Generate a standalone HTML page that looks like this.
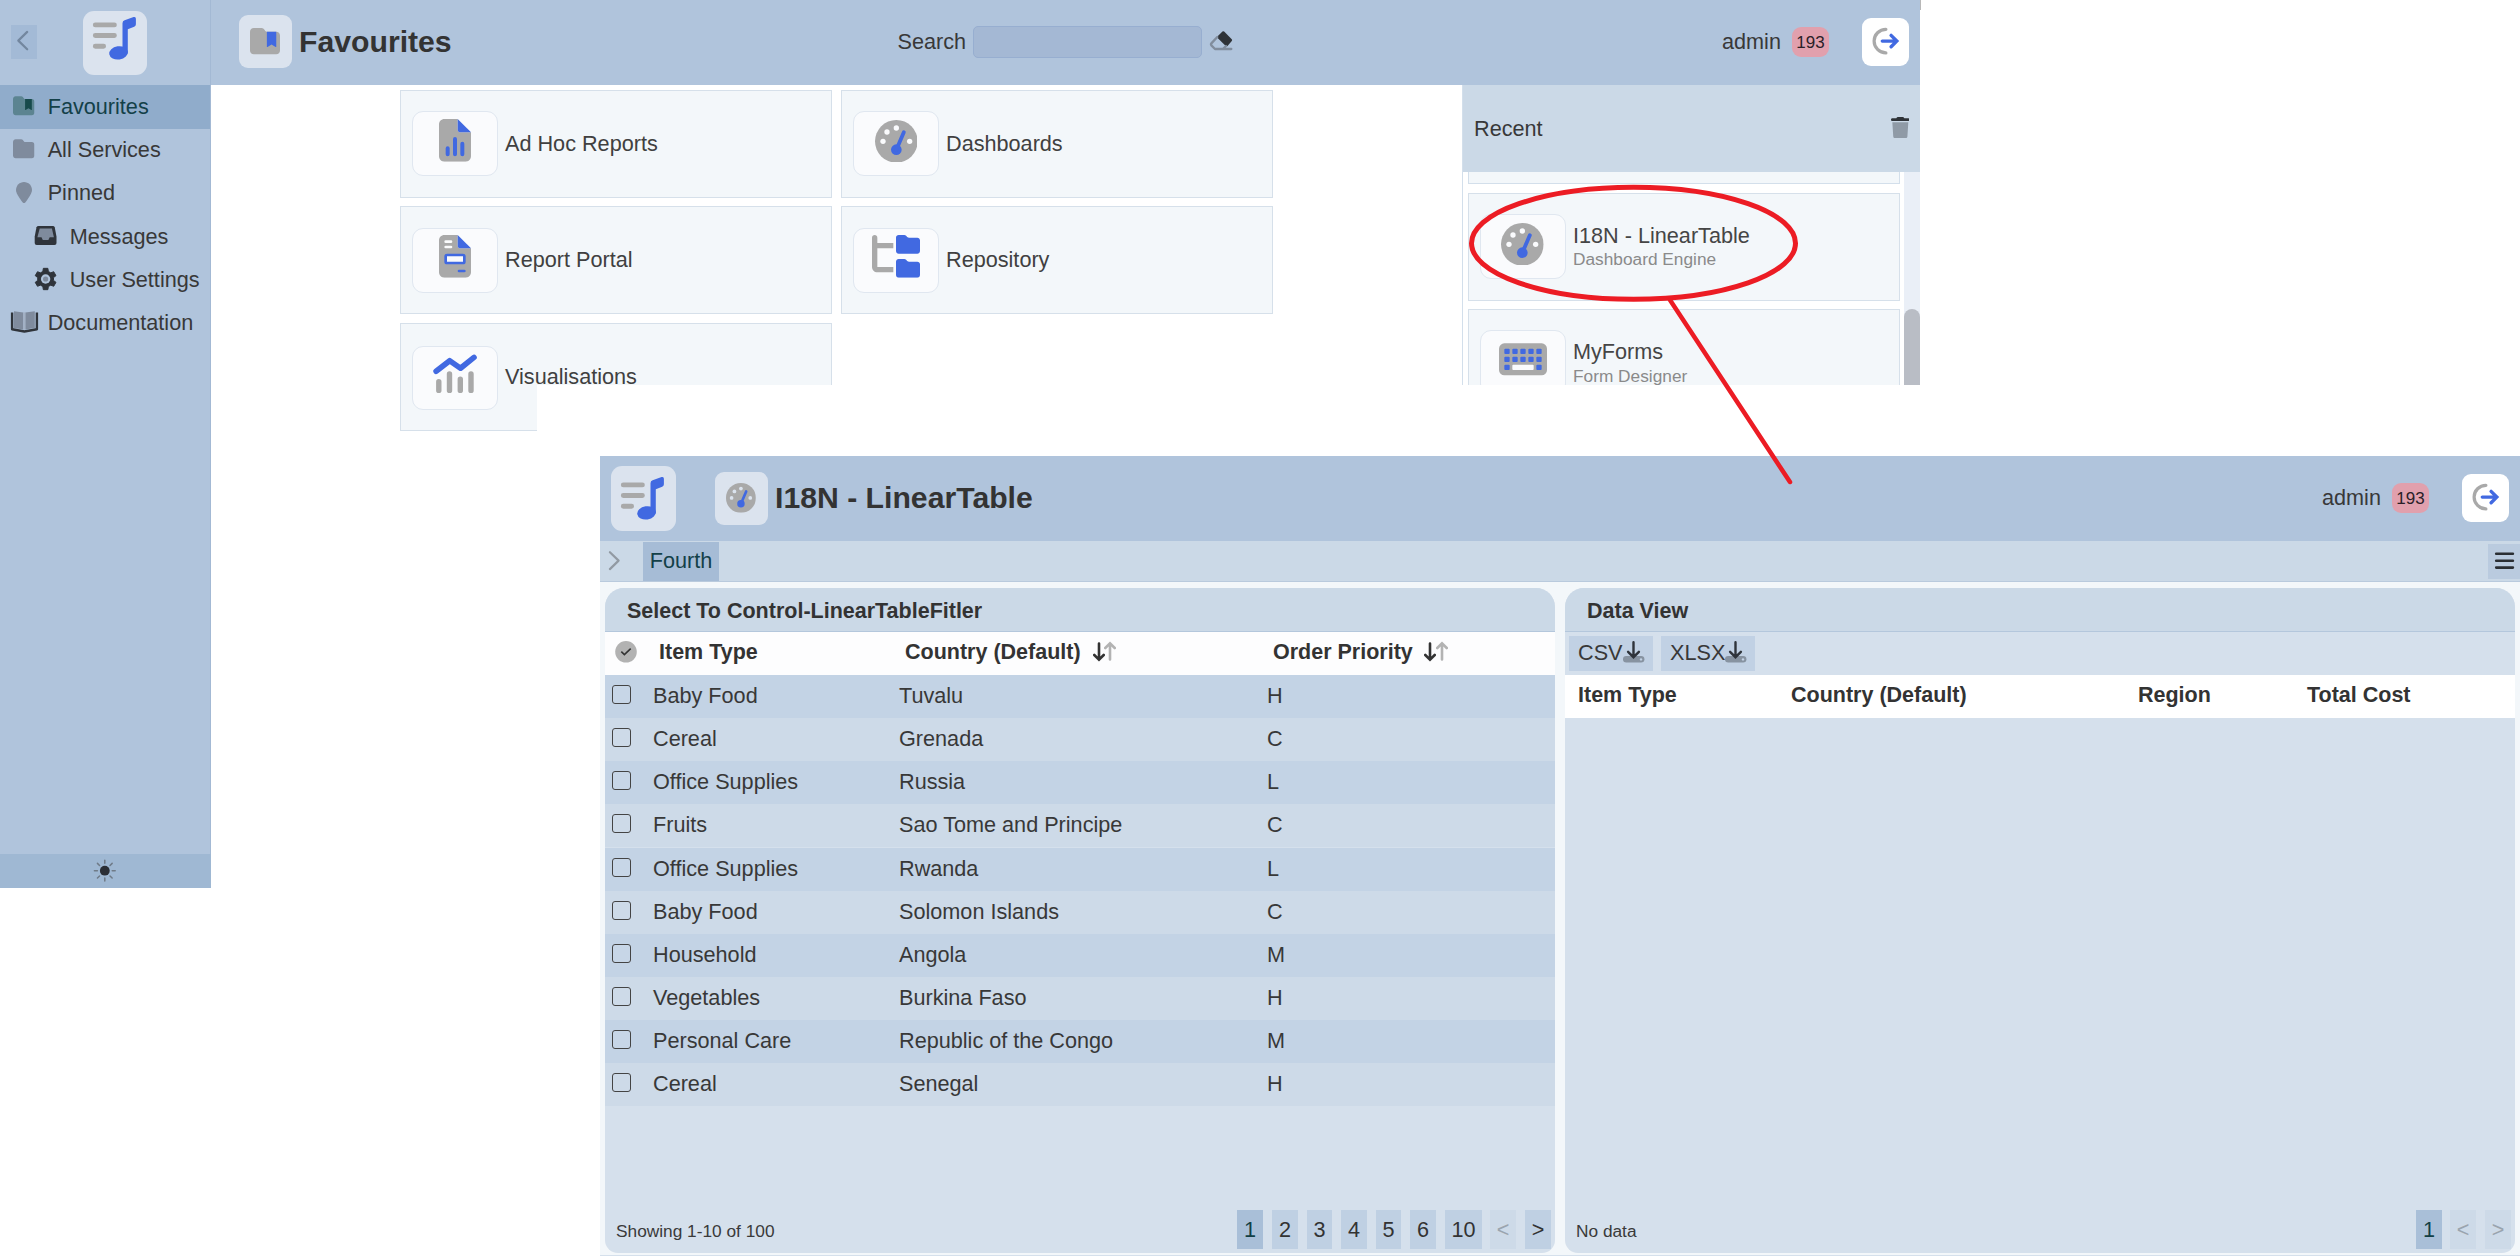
<!DOCTYPE html>
<html><head><meta charset="utf-8">
<style>
*{box-sizing:border-box;margin:0;padding:0}
html,body{width:2520px;height:1256px;overflow:hidden;background:#fff}
body{font-family:"Liberation Sans",sans-serif;font-size:21.65px;color:#383838;position:relative}
.abs{position:absolute}
/* ---------- screenshot A (top-left) ---------- */
#side{left:0;top:0;width:211px;height:888px;background:#b0c4dc;border-right:1px solid #a3b9d4}
#sidefoot{left:0;top:854px;width:211px;height:34px;background:#9fb8d3}
#hdrA{left:211px;top:0;width:1709px;height:85px;background:#b0c4dc}
.back{left:11px;top:25px;width:26px;height:34px;background:#a3bad6}
.logo{width:64px;height:64px;border-radius:11px;background:#dbe3ee}
.ibox{width:53px;height:53px;border-radius:9px;background:#dbe3ee}
.nav{left:0;width:210px;height:43px;line-height:43px;white-space:nowrap}
.nav span{position:absolute;top:0}
.title{font-weight:bold;font-size:30.2px;color:#333;white-space:nowrap}
.tile{width:432px;height:108px;background:#f3f7fa;border:1px solid #d6e0ea}
.tbox{position:absolute;left:11px;top:20px;width:86px;height:65px;border-radius:11px;background:#fafbfd;border:1px solid #e0e7f0}
.tlabel{position:absolute;left:104px;top:0;height:106px;line-height:106px;white-space:nowrap;color:#404040}
.badge{width:37px;height:30px;border-radius:9px;background:#e1a0ad;color:#2a2028;font-size:17px;line-height:31px;text-align:center}
.logout{width:47px;height:48px;border-radius:9px;background:#fff}
/* ---------- screenshot B (bottom-right) ---------- */
#B{left:600px;top:456px;width:1920px;height:800px;background:#f3f7fa;overflow:hidden}
#hdrB{left:0;top:0;width:1920px;height:85px;background:#b0c4dc}
#tabs{left:0;top:85px;width:1920px;height:41px;background:#cbd9e7;border-bottom:1px solid #b9cadd}
.panel{top:132px;height:665px;background:#d5e0ec;border-radius:19px 19px 13px 13px;overflow:hidden}
.phead{left:0;top:0;width:100%;height:44px;background:#cbd9e7;border-bottom:1px solid #b4c7dc;font-weight:bold;font-size:21.5px;line-height:47px;padding-left:22px;color:#333}
.throw{left:0;width:100%;height:43px;background:#fdfdfe;font-weight:bold;font-size:21.5px;line-height:41px;color:#333}
.throw span,.row span{position:absolute;top:0;white-space:nowrap}
.row{left:0;width:100%;height:43.1px;line-height:41px}
.row.d{background:#c3d3e5}.row.l{background:#cddae8}
.cb{position:absolute;left:6.6px;top:10px;width:19px;height:19px;border:1.6px solid #444;border-radius:3px;background:#cddae8}
.row.d .cb{background:#c7d6e7}
.pg{top:622px;height:39px;background:#bfd0e3;text-align:center;line-height:39px;font-size:21.65px;color:#333}
.pg.on{background:#a9bfd8;color:#123f45}
.pg.off{background:#cddae8;color:#9aa4ae}
.s{fill:var(--s)}.p{fill:var(--p)}.h{fill:var(--h)}
.small{font-size:17.3px;color:#3a3a3a;white-space:nowrap}
</style></head><body>
<svg width="0" height="0" style="position:absolute"><defs>
<symbol id="logo" viewBox="0 0 64 64">
 <g stroke="#a9a9a9" stroke-width="4.9" stroke-linecap="round"><path d="M13.3 14.9H32.4M13.3 25.5H32.4M13.3 36.3H21.6"/></g>
 <path fill="#4169e1" d="M40.5 13.2Q40.5 11 42.6 10.3L51.6 7.1Q53.9 6.4 53.9 8.8V14.2Q53.9 16.1 52.2 16.8L45.8 19.3V43.5H40.5Z"/>
 <ellipse cx="36.6" cy="42.9" rx="9.4" ry="6.6" transform="rotate(-9 36.4 43.2)" fill="#4169e1"/>
</symbol>
<symbol id="folderbm" viewBox="0 0 512 512">
 <path class="s" d="M64 480H448c35.3 0 64-28.700 64-64V160c0-35.300-28.700-64-64-64H288c-10.100 0-19.600-4.700-25.600-12.800L243.200 57.600C231.100 41.500 212.100 32 192 32H64C28.700 32 0 60.700 0 96V416c0 35.300 28.700 64 64 64z"/>
 <path class="p" d="M288 96H448V352c0 6-6 9-11 6l-69-42-69 42c-5 3-11 0-11-6z"/>
</symbol>
<symbol id="folder" viewBox="0 0 512 512">
 <path d="M64 480H448c35.3 0 64-28.700 64-64V160c0-35.300-28.700-64-64-64H288c-10.100 0-19.600-4.700-25.600-12.800L243.200 57.600C231.100 41.500 212.100 32 192 32H64C28.700 32 0 60.700 0 96V416c0 35.300 28.700 64 64 64z"/>
</symbol>
<symbol id="pin" viewBox="0 0 384 512">
 <path d="M384 192c0 87.400-117 243-168.300 307.200c-12.300 15.300-35.100 15.300-47.400 0C117 435 0 279.400 0 192C0 86 86 0 192 0S384 86 384 192z"/>
</symbol>
<symbol id="filechart" viewBox="0 0 384 512">
 <path fill="#a9a9a9" d="M64 0C28.700 0 0 28.700 0 64V448c0 35.300 28.700 64 64 64H320c35.300 0 64-28.700 64-64V160H256c-17.700 0-32-14.300-32-32V0H64z"/>
 <path fill="#4169e1" d="M224 0V128c0 17.700 14.300 32 32 32H384L224 0z"/>
 <g stroke="#4169e1" stroke-width="48" stroke-linecap="round"><path d="M104 352V424M192 240V424M280 296V424"/></g>
</symbol>
<symbol id="fileinv" viewBox="0 0 384 512">
 <path fill="#a9a9a9" d="M64 0C28.700 0 0 28.700 0 64V448c0 35.300 28.700 64 64 64H320c35.300 0 64-28.700 64-64V160H256c-17.700 0-32-14.300-32-32V0H64z"/>
 <path fill="#4169e1" d="M224 0V128c0 17.700 14.300 32 32 32H384L224 0z"/>
 <g stroke="#fafbfd" stroke-width="32" stroke-linecap="round"><path d="M80 80H144M80 144H144"/></g>
 <rect x="80" y="240" width="224" height="96" rx="16" fill="#fafbfd" stroke="#4169e1" stroke-width="32"/>
 <path d="M240 432H304" stroke="#4169e1" stroke-width="32" stroke-linecap="round"/>
</symbol>
<symbol id="gauge" viewBox="0 0 512 512">
 <circle cx="256" cy="256" r="256" fill="#a9a9a9"/>
 <g class="h"><circle cx="256" cy="96" r="32"/><circle cx="144" cy="144" r="32"/><circle cx="96" cy="256" r="32"/><circle cx="416" cy="256" r="32"/></g>
 <circle cx="256" cy="356" r="64" fill="#4169e1"/>
 <path d="M256 356L346 146" stroke="#4169e1" stroke-width="46" stroke-linecap="round"/>
</symbol>
<symbol id="ftree" viewBox="0 0 576 512">
 <path fill="#a9a9a9" d="M64 32C64 14.300 49.700 0 32 0S0 14.300 0 32v96V384c0 35.300 28.700 64 64 64H256V384H64V160H256V96H64V32z"/>
 <path fill="#4169e1" d="M288 192c0 17.700 14.300 32 32 32H544c17.700 0 32-14.300 32-32V64c0-17.700-14.300-32-32-32H445.300c-8.500 0-16.600-3.400-22.600-9.400L409.400 9.400c-6-6-14.100-9.400-22.600-9.400H320c-17.700 0-32 14.300-32 32V192zm0 288c0 17.700 14.300 32 32 32H544c17.700 0 32-14.300 32-32V352c0-17.700-14.300-32-32-32H445.300c-8.500 0-16.600-3.400-22.600-9.400l-13.300-13.300c-6-6-14.100-9.400-22.600-9.400H320c-17.700 0-32 14.300-32 32V480z"/>
</symbol>
<symbol id="kbd" viewBox="0 0 576 512">
 <rect x="0" y="64" width="576" height="384" rx="64" fill="#a9a9a9"/>
 <g fill="#4169e1"><rect x="64" y="128" width="64" height="64" rx="12"/><rect x="160" y="128" width="64" height="64" rx="12"/><rect x="256" y="128" width="64" height="64" rx="12"/><rect x="352" y="128" width="64" height="64" rx="12"/><rect x="448" y="128" width="64" height="64" rx="12"/>
 <rect x="64" y="224" width="64" height="64" rx="12"/><rect x="160" y="224" width="64" height="64" rx="12"/><rect x="256" y="224" width="64" height="64" rx="12"/><rect x="352" y="224" width="64" height="64" rx="12"/><rect x="448" y="224" width="64" height="64" rx="12"/>
 <rect x="64" y="320" width="64" height="64" rx="12"/><rect x="448" y="320" width="64" height="64" rx="12"/></g>
 <rect x="160" y="320" width="256" height="64" rx="12" fill="#fafbfd"/>
</symbol>
<symbol id="trash" viewBox="0 0 448 512">
 <path fill="#8f9aa6" d="M32 128H416L394 466c-1.600 26-23 46-49 46H103c-26 0-47.400-20-49-46L32 128z"/>
 <path fill="#2f3338" d="M163.800 0c-12.100 0-23.200 6.800-28.600 17.700L128 32H32C14.300 32 0 46.300 0 64S14.300 96 32 96H416c17.700 0 32-14.300 32-32s-14.300-32-32-32H320l-7.200-14.300C307.400 6.800 296.300 0 284.200 0H163.800z"/>
</symbol>
<symbol id="logout" viewBox="0 0 47 48">
 <path d="M23.900 11.300A11.800 11.800 0 0 0 23.900 34.900" fill="none" stroke="#a9a9a9" stroke-width="3.200" stroke-linecap="round"/>
 <path d="M20.300 23.100H34M29.100 17.400L34.800 23.100L29.100 28.800" fill="none" stroke="#4169e1" stroke-width="3.400" stroke-linecap="round" stroke-linejoin="miter"/>
</symbol>
<symbol id="sortdn" viewBox="0 0 12 22">
 <path d="M6 2.500V18.500M1.300 14L6 18.700L10.700 14" fill="none" stroke-width="2.600" stroke-linecap="round" stroke-linejoin="miter"/>
</symbol>
<symbol id="dl" viewBox="0 0 24 24">
 <rect x="1" y="16" width="21.400" height="6.600" rx="3.300" fill="#8793a1"/>
 <circle cx="19" cy="19.400" r="1.200" fill="#c2d2e4"/>
 <path d="M11.500 2.300V17.100M6.100 11.800L11.500 17.200L16.900 11.800" fill="none" stroke="#2f343b" stroke-width="2.400" stroke-linecap="round"/>
</symbol>
</defs></svg>
<!-- A: sidebar -->
<div id="side" class="abs"></div>
<div id="sidefoot" class="abs"></div>
<div id="hdrA" class="abs"></div>
<div class="abs back"></div>
<div class="abs logo" style="left:82.5px;top:10.5px"></div>
<div class="abs nav" style="top:85px;height:44px;background:#90accb;color:#134048"><span style="left:47.7px">Favourites</span></div>
<div class="abs nav" style="top:128px"><span style="left:47.7px">All Services</span></div>
<div class="abs nav" style="top:171px"><span style="left:47.7px">Pinned</span></div>
<div class="abs nav" style="top:215px"><span style="left:69.7px">Messages</span></div>
<div class="abs nav" style="top:258px"><span style="left:69.7px">User Settings</span></div>
<div class="abs nav" style="top:301px"><span style="left:47.7px">Documentation</span></div>
<!-- A: header -->
<div class="abs ibox" style="left:239.3px;top:15.4px"></div>
<div class="abs title" style="left:299px;top:24.5px">Favourites</div>
<div class="abs" style="left:897.5px;top:29px;white-space:nowrap">Search</div>
<div class="abs" style="left:973px;top:26px;width:229px;height:32px;border-radius:5px;background:#a4b8d4;border:1px solid #97aed0"></div>
<div class="abs" style="left:1722px;top:29px">admin</div>
<div class="abs badge" style="left:1792px;top:27px">193</div>
<div class="abs logout" style="left:1862px;top:18px"></div>
<!-- A: tiles -->
<div class="abs tile" style="left:400px;top:90px"><div class="tbox"></div><div class="tlabel">Ad Hoc Reports</div></div>
<div class="abs tile" style="left:841px;top:90px"><div class="tbox"></div><div class="tlabel">Dashboards</div></div>
<div class="abs tile" style="left:400px;top:206px"><div class="tbox" style="top:21px"></div><div class="tlabel">Report Portal</div></div>
<div class="abs tile" style="left:841px;top:206px"><div class="tbox" style="top:21px"></div><div class="tlabel">Repository</div></div>
<div class="abs tile" style="left:400px;top:323px"><div class="tbox" style="top:21.500px;height:64px"></div><div class="tlabel">Visualisations</div></div>
<!-- A: recent -->
<div class="abs" style="left:1462px;top:85px;width:458px;height:300px;background:#fff;border-left:1px solid #d3dfeb"></div>
<div class="abs" style="left:1904px;top:172px;width:16px;height:213px;background:#eaeff7"></div>
<div class="abs" style="left:1904px;top:309px;width:16px;height:90px;border-radius:8px;background:#b9bdc5"></div>
<div class="abs" style="left:1468px;top:172px;width:432px;height:12px;background:#f3f7fa;border:1px solid #d3dfeb;border-top:none"></div>
<div class="abs" style="left:1463px;top:85px;width:457px;height:87px;background:#cbd9e7"></div>
<div class="abs" style="left:1474px;top:116px">Recent</div>
<div class="abs tile" style="left:1468px;top:193px"><div class="tbox"></div>
  <div class="abs" style="left:104px;top:29px;white-space:nowrap;color:#454545">I18N - LinearTable</div>
  <div class="abs small" style="left:104px;top:55px;color:#8a8a8a">Dashboard Engine</div></div>
<div class="abs tile" style="left:1468px;top:308.9px"><div class="tbox"></div>
  <div class="abs" style="left:104px;top:29.600px;white-space:nowrap;color:#454545">MyForms</div>
  <div class="abs small" style="left:104px;top:56.200px;color:#8a8a8a">Form Designer</div></div>
<svg class="abs" style="left:82px;top:10.1px" width="64" height="64"><use href="#logo"/></svg>
<svg class="abs" style="left:250.4px;top:26.1px;--s:#a9a9a9;--p:#4169e1" width="30" height="30"><use href="#folderbm"/></svg>
<svg class="abs" style="left:13.3px;top:94.9px;--s:#5c8491;--p:#174a4b" width="21.5" height="21.5"><use href="#folderbm"/></svg>
<svg class="abs" style="left:13.3px;top:137.6px;fill:#7f8b9d" width="21.5" height="21.5"><use href="#folder"/></svg>
<svg class="abs" style="left:16px;top:181.8px;fill:#7f8b9d" width="16" height="21.33"><use href="#pin"/></svg>
<svg class="abs" style="left:439.2px;top:119.3px" width="32" height="42.67"><use href="#filechart"/></svg>
<svg class="abs" style="left:874.8px;top:119.6px;--h:#fafbfd" width="42.67" height="42.67"><use href="#gauge"/></svg>
<svg class="abs" style="left:439.2px;top:235.3px" width="32" height="42.67"><use href="#fileinv"/></svg>
<svg class="abs" style="left:871.8px;top:235.2px" width="48" height="42.67"><use href="#ftree"/></svg>
<svg class="abs" style="left:1501.1px;top:222.5px;--h:#fafbfd" width="42.67" height="42.67"><use href="#gauge"/></svg>
<svg class="abs" style="left:1498.6px;top:338.4px" width="48" height="42.67"><use href="#kbd"/></svg>
<svg class="abs" style="left:1890.5px;top:117.1px" width="18.67" height="21.33"><use href="#trash"/></svg>
<svg class="abs" style="left:1862px;top:18px" width="47" height="48"><use href="#logout"/></svg>
<svg class="abs" style="left:0;top:0" width="1920" height="900" viewBox="0 0 1920 900">
 <path d="M27.200 31.900L18.300 40.600L27.200 49.300" fill="none" stroke="#73879f" stroke-width="2.200" stroke-linecap="round" stroke-linejoin="round"/>
 <path d="M1223.300 32.400L1230.900 40.100L1226.600 45.100L1218.500 37.100Z" fill="#2f3338" stroke="#2f3338" stroke-width="2.400" stroke-linejoin="round"/>
 <path d="M1217.300 37L1211.600 43.100Q1210.400 44.400 1211.600 45.700L1215 49H1231.300M1226 46L1222.800 49" fill="none" stroke="#818d9d" stroke-width="2.300" stroke-linecap="round" stroke-linejoin="round"/>
 <g><circle cx="104.800" cy="870.700" r="4.900" fill="#2b2f36"/><g stroke="#6f7b88" stroke-width="1.500" stroke-linecap="round"><path d="M104.800 860.300V863.300M104.800 878.100V881.100M94.400 870.700H97.400M112.200 870.700H115.200M97.450 863.350L99.570 865.470M110.030 875.930L112.150 878.050M97.450 878.050L99.570 875.930M110.030 865.470L112.150 863.350"/></g></g>
 <path d="M38.600 225.900H52.900Q54.300 225.900 54.700 227.300L56.500 236.500V243Q56.500 245 54.500 245H36.700Q34.700 245 34.700 243V236.500L36.500 227.300Q36.900 225.900 38.600 225.900Z" fill="#2f343b"/>
 <path d="M39.700 228.400H51.900L53.900 237.300H49.700L48.400 239.900H42.800L41.500 237.300H37.400Z" fill="#7f8b9d"/>
 <g transform="translate(45.600 279)"><path d="M-2.74 -7.52 L-2.27 -10.66 L2.27 -10.66 L2.74 -7.52 L5.14 -6.13 L8.10 -7.29 L10.37 -3.37 L7.88 -1.39 L7.88 1.39 L10.37 3.37 L8.10 7.29 L5.14 6.13 L2.74 7.52 L2.27 10.66 L-2.27 10.66 L-2.74 7.52 L-5.14 6.13 L-8.10 7.29 L-10.37 3.37 L-7.88 1.39 L-7.88 -1.39 L-10.37 -3.37 L-8.10 -7.29 L-5.14 -6.13Z" fill="#2f343b" stroke="#2f343b" stroke-width="1" stroke-linejoin="round"/><circle r="4.700" fill="#b0c4dc"/><circle r="2.600" fill="#7f8b9d"/></g>
 <path d="M14 311.200L23.300 312.400V329.600L14 327.900ZM34.800 311.200L25.300 312.400V329.600L34.800 327.900Z" fill="#7f8b9d"/>
 <path d="M23.300 312.400H25.300V329.600H23.300Z" fill="#a3b1c4"/>
 <path d="M12.100 312.500V329.200L24.400 331.500L36.900 329.200V312.500" fill="none" stroke="#2f343b" stroke-width="2.400" stroke-linejoin="round"/>
 <path d="M436.100 371.200L449.700 360.700L460.500 368.200L474 357.400" fill="none" stroke="#4169e1" stroke-width="5.600" stroke-linecap="round" stroke-linejoin="round"/>
 <path d="M438.800 381.700V390.400M449.500 373.900V390.400M460.300 379.300V390.400M471 373.900V390.400" fill="none" stroke="#a9a9a9" stroke-width="5.400" stroke-linecap="round"/>
</svg>
<!-- crop masks -->
<div class="abs" style="left:537px;top:385px;width:1983px;height:71px;background:#fff"></div>
<div class="abs" style="left:211px;top:431px;width:389px;height:825px;background:#fff"></div>
<div class="abs" style="left:1920px;top:0;width:600px;height:456px;background:#fff"></div>
<div class="abs" style="left:1920px;top:0;width:1px;height:10px;background:#b8b8b8"></div>
<!-- B -->
<div id="B" class="abs">
 <div class="abs" style="left:0;top:799px;width:1920px;height:1px;background:#d5e0ec"></div>
 <div id="hdrB" class="abs"></div>
 <div class="abs logo" style="left:11.1px;top:9.9px;width:65px;height:65px"></div>
 <div class="abs ibox" style="left:114.5px;top:15.5px"></div>
 <div class="abs title" style="left:175px;top:24.7px">I18N - LinearTable</div>
 <div class="abs" style="left:1722px;top:29px">admin</div>
 <div class="abs badge" style="left:1792px;top:27px">193</div>
 <div class="abs logout" style="left:1862px;top:18px"></div>
 <div id="tabs" class="abs"></div>
 <div class="abs" style="left:43px;top:86px;width:76px;height:39px;background:#a6bcd6;color:#134048;line-height:37px;text-align:center">Fourth</div>
 <div class="abs" style="left:1888px;top:88px;width:32px;height:35px;background:#bacbdf"></div>
 <!-- left panel -->
 <div class="abs panel" id="LP" style="left:5px;width:950px">
  <div class="abs phead">Select To Control-LinearTableFitler</div>
  <div class="abs throw" style="top:44px"><span style="left:54px">Item Type</span><span style="left:300px">Country (Default)</span><span style="left:668px">Order Priority</span></div>
  <div class="abs row d" style="top:87.1px"><i class="cb"></i><span style="left:48px">Baby Food</span><span style="left:294px">Tuvalu</span><span style="left:662px">H</span></div>
  <div class="abs row l" style="top:130.2px"><i class="cb"></i><span style="left:48px">Cereal</span><span style="left:294px">Grenada</span><span style="left:662px">C</span></div>
  <div class="abs row d" style="top:173.3px"><i class="cb"></i><span style="left:48px">Office Supplies</span><span style="left:294px">Russia</span><span style="left:662px">L</span></div>
  <div class="abs row l" style="top:216.4px"><i class="cb"></i><span style="left:48px">Fruits</span><span style="left:294px">Sao Tome and Principe</span><span style="left:662px">C</span></div>
  <div class="abs row d" style="top:259.5px"><i class="cb"></i><span style="left:48px">Office Supplies</span><span style="left:294px">Rwanda</span><span style="left:662px">L</span></div>
  <div class="abs row l" style="top:302.6px"><i class="cb"></i><span style="left:48px">Baby Food</span><span style="left:294px">Solomon Islands</span><span style="left:662px">C</span></div>
  <div class="abs row d" style="top:345.7px"><i class="cb"></i><span style="left:48px">Household</span><span style="left:294px">Angola</span><span style="left:662px">M</span></div>
  <div class="abs row l" style="top:388.8px"><i class="cb"></i><span style="left:48px">Vegetables</span><span style="left:294px">Burkina Faso</span><span style="left:662px">H</span></div>
  <div class="abs row d" style="top:431.9px"><i class="cb"></i><span style="left:48px">Personal Care</span><span style="left:294px">Republic of the Congo</span><span style="left:662px">M</span></div>
  <div class="abs row l" style="top:475.0px"><i class="cb"></i><span style="left:48px">Cereal</span><span style="left:294px">Senegal</span><span style="left:662px">H</span></div>
  <div class="abs small" style="left:11px;top:633px">Showing 1-10 of 100</div>
  <div class="abs pg on" style="left:632px;width:26px">1</div>
  <div class="abs pg " style="left:667px;width:26px">2</div>
  <div class="abs pg " style="left:702px;width:25px">3</div>
  <div class="abs pg " style="left:736px;width:26px">4</div>
  <div class="abs pg " style="left:771px;width:25px">5</div>
  <div class="abs pg " style="left:805px;width:26px">6</div>
  <div class="abs pg " style="left:840px;width:37px">10</div>
  <div class="abs pg off" style="left:885px;width:26px">&lt;</div>
  <div class="abs pg " style="left:920px;width:26px">&gt;</div>
 </div>
 <!-- right panel -->
 <div class="abs panel" id="RP" style="left:965px;width:950px">
  <div class="abs phead">Data View</div>
  <div class="abs" style="left:4px;top:48px;width:84px;height:35px;background:#c1d1e4;line-height:33.500px;padding-left:9px">CSV</div>
  <div class="abs" style="left:96px;top:48px;width:94px;height:35px;background:#c1d1e4;line-height:33.500px;padding-left:9px">XLSX</div>
  <div class="abs throw" style="top:87px;background:#fff"><span style="left:13px">Item Type</span><span style="left:226px">Country (Default)</span><span style="left:573px">Region</span><span style="left:742px">Total Cost</span></div>
  <div class="abs small" style="left:11px;top:633px">No data</div>
  <div class="abs pg on" style="left:851px;width:26px">1</div>
  <div class="abs pg off" style="left:885px;width:26px">&lt;</div>
  <div class="abs pg off" style="left:920px;width:26px">&gt;</div>
 </div>
<svg class="abs" style="left:10.1px;top:14.2px" width="64" height="64"><use href="#logo"/></svg>
<svg class="abs" style="left:126.3px;top:26.8px;--h:#dbe3ee" width="29.87" height="29.87"><use href="#gauge"/></svg>
<svg class="abs" style="left:1862px;top:18px" width="47" height="48"><use href="#logout"/></svg>
<svg class="abs" style="left:492.9px;top:184.9px;stroke:#333" width="12" height="22"><use href="#sortdn"/></svg>
<svg class="abs" style="left:503.8px;top:184.3px;stroke:#b3b3b3;transform:rotate(180deg)" width="12" height="22"><use href="#sortdn"/></svg>
<svg class="abs" style="left:824.4px;top:184.9px;stroke:#333" width="12" height="22"><use href="#sortdn"/></svg>
<svg class="abs" style="left:836px;top:184.3px;stroke:#b3b3b3;transform:rotate(180deg)" width="12" height="22"><use href="#sortdn"/></svg>
<svg class="abs" style="left:1021.8px;top:183.8px" width="24" height="24"><use href="#dl"/></svg>
<svg class="abs" style="left:1124.3px;top:183.8px" width="24" height="24"><use href="#dl"/></svg>
<svg class="abs" style="left:0;top:0" width="1920" height="800" viewBox="600 456 1920 800">
 <path d="M609.900 552.200L618.600 560.600L609.900 569.100" fill="none" stroke="#929aa3" stroke-width="2.200" stroke-linecap="round" stroke-linejoin="round"/>
 <path d="M2496.200 553.800H2512.900M2496.200 560.700H2512.900M2496.200 567.600H2512.900" stroke="#2a2e33" stroke-width="2.600" stroke-linecap="round"/>
 <circle cx="626" cy="651.800" r="10.800" fill="#b2b2b2"/>
 <path d="M621.300 651.600L624.400 654.600L630.700 648.600" fill="none" stroke="#333" stroke-width="1.600"/>
</svg>
</div>
<!-- annotation -->
<svg class="abs" style="left:0;top:0" width="2520" height="1256" viewBox="0 0 2520 1256">
 <ellipse cx="1633.5" cy="243.3" rx="162" ry="56" fill="none" stroke="#ec1c24" stroke-width="5"/>
 <line x1="1670" y1="300" x2="1790" y2="482" stroke="#ec1c24" stroke-width="4.5" stroke-linecap="round"/>
</svg>
</body></html>
